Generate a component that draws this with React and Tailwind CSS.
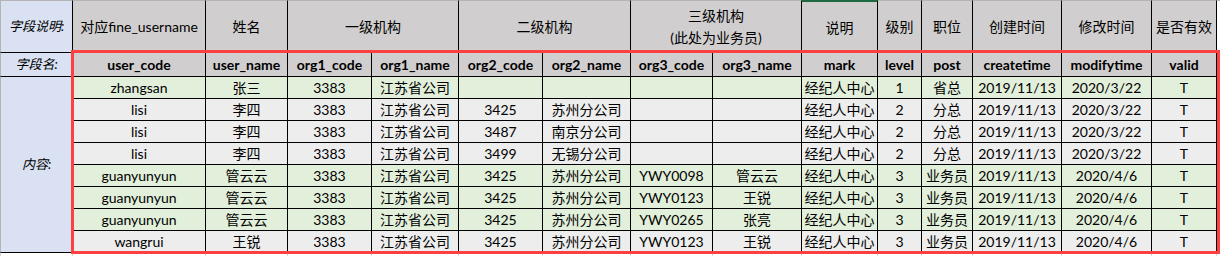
import React from "react";

const rows = [
  { g: true, c: ["zhangsan", "张三", "3383", "江苏省公司", "", "", "", "", "经纪人中心", "1", "省总", "2019/11/13", "2020/3/22", "T"] },
  { g: false, c: ["lisi", "李四", "3383", "江苏省公司", "3425", "苏州分公司", "", "", "经纪人中心", "2", "分总", "2019/11/13", "2020/3/22", "T"] },
  { g: false, c: ["lisi", "李四", "3383", "江苏省公司", "3487", "南京分公司", "", "", "经纪人中心", "2", "分总", "2019/11/13", "2020/3/22", "T"] },
  { g: false, c: ["lisi", "李四", "3383", "江苏省公司", "3499", "无锡分公司", "", "", "经纪人中心", "2", "分总", "2019/11/13", "2020/3/22", "T"] },
  { g: true, c: ["guanyunyun", "管云云", "3383", "江苏省公司", "3425", "苏州分公司", "YWY0098", "管云云", "经纪人中心", "3", "业务员", "2019/11/13", "2020/4/6", "T"] },
  { g: true, c: ["guanyunyun", "管云云", "3383", "江苏省公司", "3425", "苏州分公司", "YWY0123", "王锐", "经纪人中心", "3", "业务员", "2019/11/13", "2020/4/6", "T"] },
  { g: true, c: ["guanyunyun", "管云云", "3383", "江苏省公司", "3425", "苏州分公司", "YWY0265", "张亮", "经纪人中心", "3", "业务员", "2019/11/13", "2020/4/6", "T"] },
  { g: false, c: ["wangrui", "王锐", "3383", "江苏省公司", "3425", "苏州分公司", "YWY0123", "王锐", "经纪人中心", "3", "业务员", "2019/11/13", "2020/4/6", "T"] },
];

const fields = ["user_code", "user_name", "org1_code", "org1_name", "org2_code", "org2_name", "org3_code", "org3_name", "mark", "level", "post", "createtime", "modifytime", "valid"];

const cell = "flex items-center justify-center text-center border-r border-b border-black whitespace-nowrap";

export default function App() {
  return (
    <div
      className="relative w-[1220px] h-[256px] bg-white overflow-hidden text-[14px] text-black"
      style={{ fontFamily: "Lato, 'Noto Sans CJK SC', sans-serif" }}
    >
      <div className="grid grid-cols-[73px_133px_82px_84px_87px_84px_88px_82px_89px_76px_44px_51px_89px_90px_65px_3px] grid-rows-[53px_24px_repeat(8,22px)_3px]">
        {/* Row 1 */}
        <div className={`${cell} bg-[#d9e1f2] border-l border-l-[#b4b4b4] border-t border-t-[#b4b4b4] italic text-[13px]`}>字段说明:</div>
        <div className={`${cell} bg-[#d0cece] border-t border-t-[#b4b4b4]`}>对应fine_username</div>
        <div className={`${cell} bg-[#d0cece] border-t border-t-[#b4b4b4]`}>姓名</div>
        <div className={`${cell} col-span-2 bg-[#d0cece] border-t border-t-[#b4b4b4]`}>一级机构</div>
        <div className={`${cell} col-span-2 bg-[#d0cece] border-t border-t-[#b4b4b4]`}>二级机构</div>
        <div className={`${cell} col-span-2 flex-col leading-[22px] bg-[#d0cece] border-t border-t-[#b4b4b4]`}>
          <span>三级机构</span>
          <span>(此处为业务员)</span>
        </div>
        <div className={`${cell} bg-[#d0cece] border-t-2 border-t-[#1e6b41]`}>说明</div>
        <div className={`${cell} bg-[#d0cece] border-t border-t-[#b4b4b4]`}>级别</div>
        <div className={`${cell} bg-[#d0cece] border-t border-t-[#b4b4b4]`}>职位</div>
        <div className={`${cell} bg-[#d0cece] border-t border-t-[#b4b4b4]`}>创建时间</div>
        <div className={`${cell} bg-[#d0cece] border-t border-t-[#b4b4b4]`}>修改时间</div>
        <div className={`${cell} bg-[#d0cece] border-t border-t-[#b4b4b4]`}>是否有效</div>
        <div className="border-t border-[#b4b4b4]" />

        {/* Row 2 */}
        <div className={`${cell} bg-[#d9e1f2] border-l border-l-[#b4b4b4] italic text-[13px]`}>字段名:</div>
        {fields.map((f) => (
          <div key={f} className={`${cell} bg-[#d0cece] font-bold`}>{f}</div>
        ))}
        <div />

        {/* Row 3..10 */}
        <div className={`${cell} row-span-8 bg-[#d9e1f2] border-l border-l-[#b4b4b4] italic text-[13px]`}>内容:</div>
        {rows.map((r, i) => (
          <React.Fragment key={i}>
            {r.c.map((v, j) => (
              <div key={j} className={`${cell} ${r.g ? "bg-[#e2efda]" : "bg-[#ededed]"}`}>{v}</div>
            ))}
            <div />
          </React.Fragment>
        ))}

        {/* bottom strip */}
        <div className="border-l border-r border-[#d4d4d4]" />
        {fields.map((f) => (
          <div key={f} className="border-r border-[#d4d4d4]" />
        ))}
        <div />
      </div>

      {/* red selection outline */}
      <div className="pointer-events-none absolute left-[71px] top-[50px] w-[1149px] h-[204px] border-[3px] border-[#ff4040]" />
    </div>
  );
}
